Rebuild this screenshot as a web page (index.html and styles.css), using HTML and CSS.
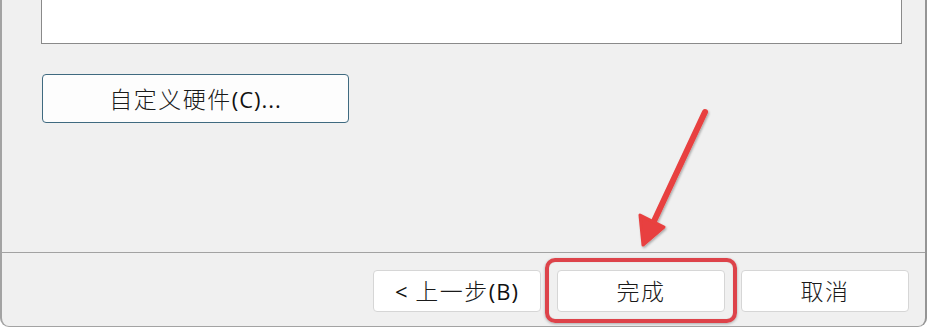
FILE: index.html
```html
<!DOCTYPE html>
<html lang="zh-CN">
<head>
<meta charset="utf-8">
<title>新建虚拟机向导</title>
<link rel="stylesheet" href="styles.css">
</head>
<body>
<div class="dialog">
  <div class="content">
    <div class="listbox"></div>
    <button class="btn btn-custom" type="button"><span class="label"><span class="cjk">自定义硬件</span>(C)...</span></button>
  </div>
  <div class="footer">
    <button class="btn btn-nav" type="button"><span class="label">&lt;&nbsp;<span class="cjk">上一步</span>(B)</span></button>
    <div class="highlight-wrap">
      <button class="btn btn-nav" type="button"><span class="label"><span class="cjk">完成</span></span></button>
      <span class="highlight"></span>
    </div>
    <button class="btn btn-nav" type="button"><span class="label"><span class="cjk">取消</span></span></button>
  </div>
  <svg class="arrow" width="927" height="327" viewBox="0 0 927 327" aria-hidden="true">
    <defs>
      <filter id="sh" x="-20%" y="-20%" width="140%" height="140%">
        <feDropShadow dx="1" dy="1.5" stdDeviation="1.2" flood-color="#000" flood-opacity="0.3"/>
      </filter>
    </defs>
    <g filter="url(#sh)" stroke="#e8403f" fill="#e8403f" stroke-linecap="round" stroke-linejoin="round">
      <line x1="705" y1="112" x2="648" y2="234" stroke-width="6"/>
      <path d="M640 215 L643 245 L664 227 Z" stroke-width="3"/>
    </g>
  </svg>
</div>
</body>
</html>
```
FILE: styles.css
```css
* { box-sizing: border-box; }

html, body {
  margin: 0;
  padding: 0;
  background: #ffffff;
}

body {
  width: 927px;
  height: 327px;
  overflow: hidden;
  font-family: "Open Sans", "Noto Sans CJK SC", sans-serif;
}

.dialog {
  position: relative;
  width: 927px;
  height: 327px;
  background: #f0f0f0;
  border-left: 2px solid #a3a3a3;
  border-right: 2px solid #959595;
  border-bottom: 1px solid #a3a3a3;
  border-radius: 0 0 9px 9px;
  display: flex;
  flex-direction: column;
}

.content {
  padding: 0 23px 0 39px;
  display: flex;
  flex-direction: column;
  align-items: flex-start;
  height: 252px;
}

.listbox {
  align-self: stretch;
  height: 44px;
  background: #ffffff;
  border: 1px solid #8a8a8a;
  border-top: none;
}

.btn {
  font-family: "Open Sans", "Noto Sans CJK SC", sans-serif;
  font-size: 22px;
  color: #111111;
  background: #fdfdfd;
  padding: 0;
  margin: 0;
  display: flex;
  align-items: center;
  justify-content: center;
  letter-spacing: 1px;
}

.label {
  white-space: nowrap;
}

.cjk {
  font-family: "Noto Sans CJK SC", sans-serif;
  font-weight: 300;
  font-size: 23px;
  letter-spacing: 1.5px;
  color: #1a1a1a;
}

.btn-custom {
  margin-top: 30px;
  margin-left: 1px;
  width: 307px;
  height: 49px;
  border: 1px solid #3f6a80;
  border-radius: 4px;
  padding-bottom: 2px;
}

.footer {
  border-top: 1px solid #a2a2a2;
  flex: 1;
  display: flex;
  justify-content: flex-end;
  align-items: flex-start;
  gap: 16px;
  padding: 17px 16px 0 0;
}

.btn-nav {
  width: 168px;
  height: 42px;
  border: 1px solid #d6d6d6;
  border-radius: 4px;
  background: #ffffff;
  padding-bottom: 2px;
}

.highlight-wrap {
  position: relative;
}

.highlight {
  position: absolute;
  left: -12px;
  right: -12px;
  top: -12px;
  bottom: -11px;
  border: 4px solid #dd434a;
  border-radius: 10px;
  box-shadow: 0 1px 3px rgba(0, 0, 0, 0.3), inset 0 0 1px rgba(0, 0, 0, 0.25);
  pointer-events: none;
}

.arrow {
  position: absolute;
  left: -2px;
  top: 0;
  pointer-events: none;
}
```
